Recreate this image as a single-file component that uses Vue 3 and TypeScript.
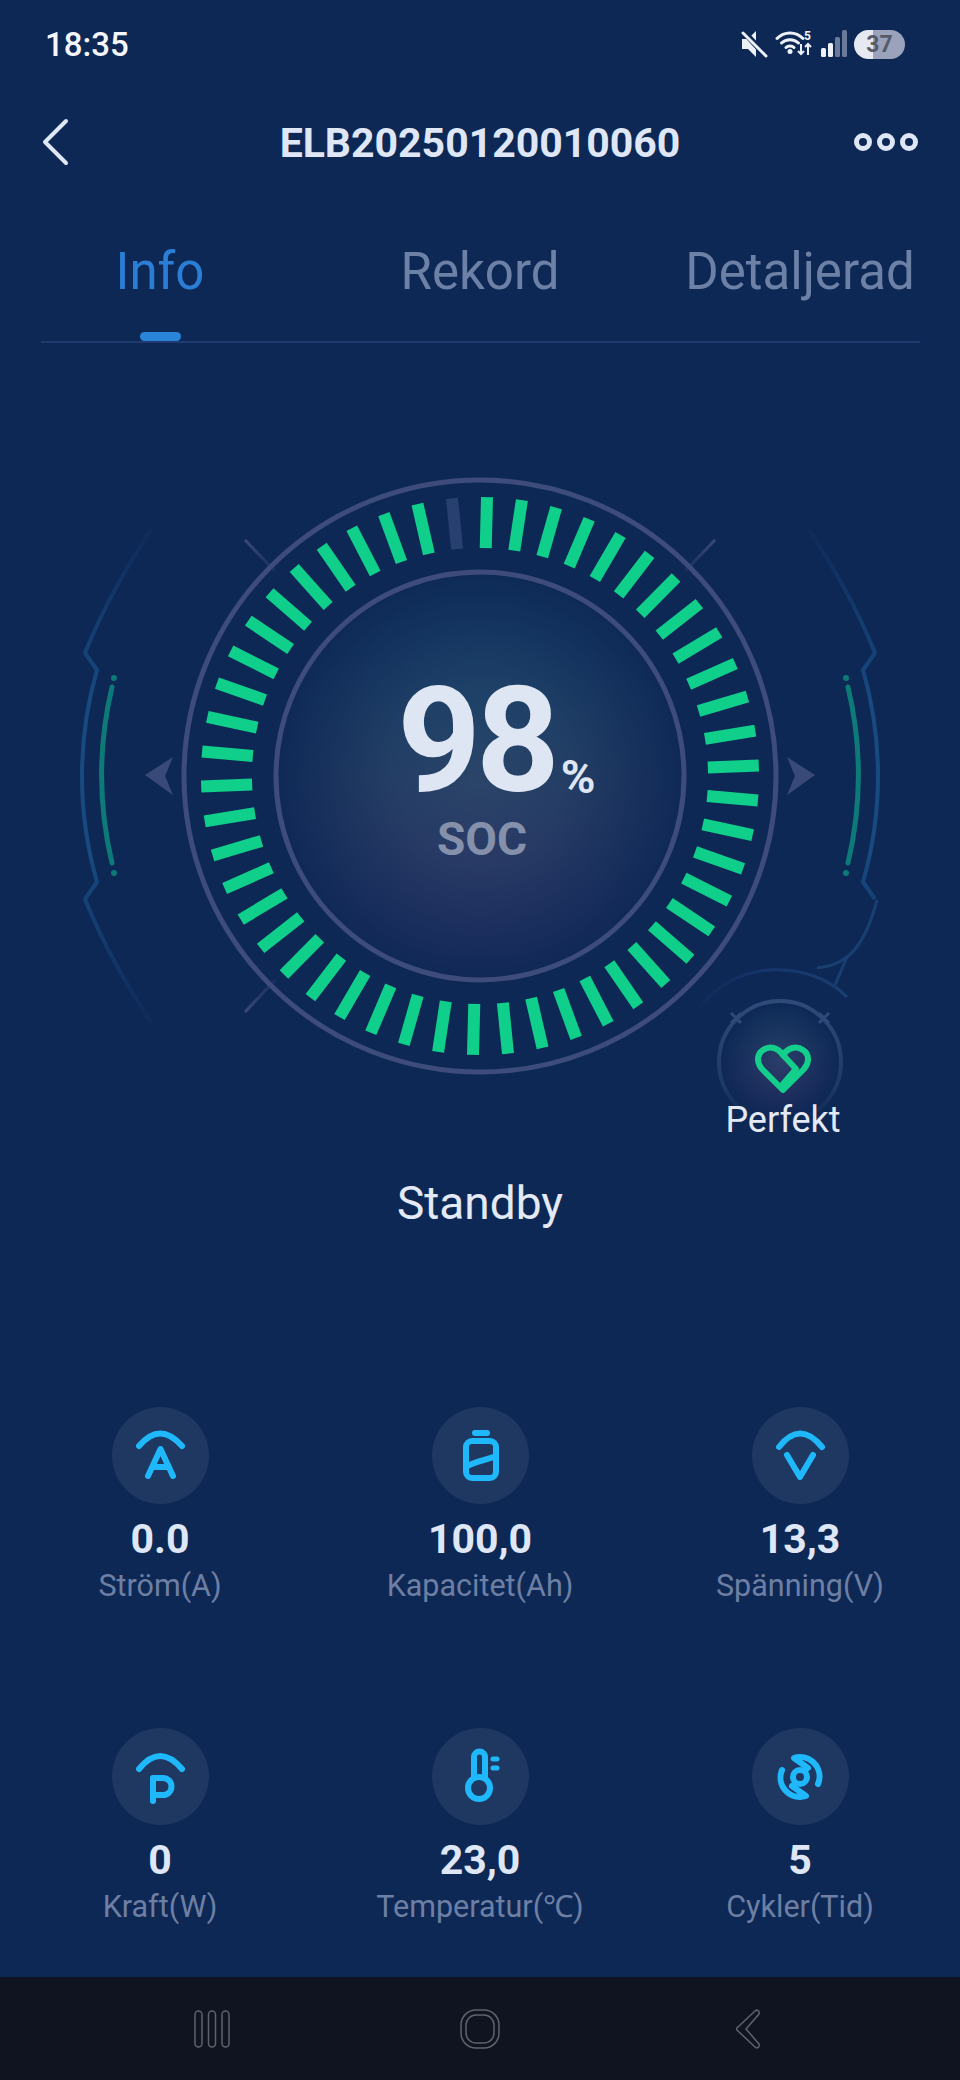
<script setup lang="ts">
interface Tick {
  angle: number;
  on: boolean;
}

interface Stat {
  value: string;
  label: string;
  icon: string;
}

const tabs = ["Info", "Rekord", "Detaljerad"];

// 50 segments, 98 % means one stays dark
const ticks: Tick[] = Array.from({ length: 50 }, (_, i) => ({
  angle: 1.44 + i * 7.2,
  on: i !== 49,
}));

const stats: Stat[] = [
  { value: "0.0", label: "Ström(A)", icon: "current" },
  { value: "100,0", label: "Kapacitet(Ah)", icon: "capacity" },
  { value: "13,3", label: "Spänning(V)", icon: "voltage" },
  { value: "0", label: "Kraft(W)", icon: "power" },
  { value: "23,0", label: "Temperatur(℃)", icon: "temp" },
  { value: "5", label: "Cykler(Tid)", icon: "cycles" },
];
</script>

<template>
  <div class="screen">
    <div class="status">
      <span class="status__time">18:35</span>
      <div class="status__icons">
        <svg width="28" height="28" viewBox="0 0 28 28">
          <path d="M2 9h6l8-8v26l-8-8H2z" fill="#eef1f7" />
          <path d="M3 1l24 26" stroke="#0e2856" stroke-width="6" />
          <path d="M3 3l23 23" stroke="#eef1f7" stroke-width="3" stroke-linecap="round" />
        </svg>
        <svg width="38" height="28" viewBox="0 0 38 28">
          <g fill="none" stroke="#eef1f7" stroke-width="3" stroke-linecap="round">
            <path d="M2 8.500C9 1 21 1 28 8.500" />
            <path d="M6.500 13C11 8.500 19 8.500 23.500 13" />
            <path d="M11 17.500C13 15.500 17 15.500 19 17.500" />
          </g>
          <circle cx="15" cy="21.500" r="2.500" fill="#eef1f7" />
          <text x="29" y="10" class="status__five">5</text>
          <path d="M26 14v10M23 21l3 3 3-3M33 25V14M30 17l3-3 3 3" fill="none" stroke="#eef1f7" stroke-width="2" />
        </svg>
        <svg width="28" height="28" viewBox="0 0 28 28">
          <rect x="1" y="18" width="5" height="9" rx="1.500" fill="#eef1f7" />
          <rect x="8" y="13" width="5" height="14" rx="1.500" fill="#eef1f7" />
          <rect x="15" y="7" width="5" height="20" rx="1.500" fill="#6b7a9b" />
          <rect x="22" y="0" width="5" height="27" rx="1.500" fill="#6b7a9b" />
        </svg>
        <div class="status__battery">37</div>
      </div>
    </div>

    <header class="header">
      <svg class="header__back" width="28" height="48" viewBox="0 0 28 48">
        <path d="M25 3L4 24l21 21" fill="none" stroke="#dfe7f7" stroke-width="4" stroke-linecap="round" stroke-linejoin="round" />
      </svg>
      <h1 class="header__title">ELB20250120010060</h1>
      <svg class="header__more" width="66" height="20" viewBox="0 0 66 20">
        <g fill="none" stroke="#dfe7f7" stroke-width="5">
          <circle cx="10" cy="10" r="6.500" />
          <circle cx="33" cy="10" r="6.500" />
          <circle cx="56" cy="10" r="6.500" />
        </g>
      </svg>
    </header>

    <nav class="tabs">
      <span
        v-for="(tab, i) in tabs"
        :key="tab"
        :class="['tabs__item', { 'tabs__item--active': i === 0 }]"
      >{{ tab }}</span>
    </nav>
    <div class="tabs__rule"></div>

    <section class="gauge">
      <svg class="gauge__art" width="960" height="800" viewBox="0 0 960 800">
        <defs>
          <radialGradient id="coreFade" cx="50%" cy="50%" r="50%">
            <stop offset="0" stop-color="#fff" />
            <stop offset="0.45" stop-color="#fff" stop-opacity="0.75" />
            <stop offset="1" stop-color="#fff" stop-opacity="0.05" />
          </radialGradient>
          <mask id="coreMask">
            <circle cx="480" cy="400" r="204" fill="url(#coreFade)" />
          </mask>
          <linearGradient id="coreTint" x1="0" y1="0" x2="0" y2="1">
            <stop offset="0" stop-color="#1a4c72" />
            <stop offset="0.5" stop-color="#2b4569" />
            <stop offset="1" stop-color="#37386b" />
          </linearGradient>
          <linearGradient id="frame" gradientUnits="userSpaceOnUse" x1="0" y1="140" x2="0" y2="660">
            <stop offset="0" stop-color="#174a80" stop-opacity="0" />
            <stop offset="0.25" stop-color="#174a80" stop-opacity="0.7" />
            <stop offset="0.35" stop-color="#174a80" />
            <stop offset="0.65" stop-color="#174a80" />
            <stop offset="0.75" stop-color="#174a80" stop-opacity="0.7" />
            <stop offset="1" stop-color="#174a80" stop-opacity="0" />
          </linearGradient>
          <linearGradient id="spoke" gradientUnits="userSpaceOnUse" x1="245" y1="164" x2="275" y2="195">
            <stop offset="0" stop-color="#3a4a78" />
            <stop offset="1" stop-color="#3a4a78" stop-opacity="0.2" />
          </linearGradient>
          <linearGradient id="spokeLow" gradientUnits="userSpaceOnUse" x1="245" y1="636" x2="275" y2="604">
            <stop offset="0" stop-color="#3a4a78" />
            <stop offset="1" stop-color="#3a4a78" stop-opacity="0.2" />
          </linearGradient>
        </defs>

        <circle cx="480" cy="400" r="204" fill="url(#coreTint)" mask="url(#coreMask)" />
        <circle cx="480" cy="400" r="296" fill="none" stroke="#3d4c7b" stroke-width="5" />
        <circle cx="480" cy="400" r="204" fill="none" stroke="#3d4c7b" stroke-width="5" />

        <!-- left side -->
        <path d="M153 151Q110 215 85 277L97 294A382 382 0 0 0 97 506L85 523Q110 585 153 649" fill="none" stroke="url(#frame)" stroke-width="4" stroke-linejoin="round" />
        <path d="M112 311A382 382 0 0 0 112 487" fill="none" stroke="#0d7a78" stroke-width="5" stroke-linecap="round" />
        <circle cx="114" cy="302" r="3" fill="#0d7a78" />
        <circle cx="114" cy="497" r="3" fill="#0d7a78" />
        <path d="M145 399L173 381L165 400L173 419Z" fill="#3a4a78" />
        <path d="M245 164L275 195" stroke="url(#spoke)" stroke-width="3" />
        <path d="M245 636L275 604" stroke="url(#spokeLow)" stroke-width="3" />

        <!-- right side, the low end of the frame runs on into the health badge -->
        <g transform="translate(960 0) scale(-1 1)">
          <path d="M153 151Q110 215 85 277L97 294A382 382 0 0 0 97 506L85 523" fill="none" stroke="url(#frame)" stroke-width="4" stroke-linejoin="round" />
          <path d="M112 311A382 382 0 0 0 112 487" fill="none" stroke="#0d7a78" stroke-width="5" stroke-linecap="round" />
          <circle cx="114" cy="302" r="3" fill="#0d7a78" />
          <circle cx="114" cy="497" r="3" fill="#0d7a78" />
          <path d="M145 399L173 381L165 400L173 419Z" fill="#3a4a78" />
          <path d="M245 164L275 195" stroke="url(#spoke)" stroke-width="3" />
        </g>

        <rect
          v-for="tick in ticks"
          :key="tick.angle"
          x="474"
          y="121"
          width="12"
          height="51"
          :fill="tick.on ? '#10cf8a' : '#27406f'"
          :transform="`rotate(${tick.angle} 480 400)`"
        />
      </svg>

      <div class="gauge__reading">
        <div class="gauge__value">98<span class="gauge__unit">%</span></div>
        <div class="gauge__label">SOC</div>
      </div>

      <div class="health">
        <svg class="health__art" width="240" height="220" viewBox="0 0 240 220">
          <defs>
            <radialGradient id="healthFade" cx="50%" cy="50%" r="50%">
              <stop offset="0" stop-color="#fff" stop-opacity="0.9" />
              <stop offset="1" stop-color="#fff" stop-opacity="0" />
            </radialGradient>
            <mask id="healthMask">
              <circle cx="100" cy="100" r="60" fill="url(#healthFade)" />
            </mask>
            <linearGradient id="healthTint" x1="0" y1="0" x2="0" y2="1">
              <stop offset="0" stop-color="#24506f" />
              <stop offset="1" stop-color="#3a3068" />
            </linearGradient>
            <linearGradient id="healthRing" x1="0" y1="0" x2="0" y2="1">
              <stop offset="0" stop-color="#2e4a78" />
              <stop offset="0.7" stop-color="#2e4a78" stop-opacity="0.5" />
              <stop offset="1" stop-color="#2e4a78" stop-opacity="0" />
            </linearGradient>
            <linearGradient id="healthArc" gradientUnits="userSpaceOnUse" x1="20" y1="0" x2="170" y2="0">
              <stop offset="0" stop-color="#16366c" stop-opacity="0.2" />
              <stop offset="0.5" stop-color="#16366c" />
              <stop offset="1" stop-color="#174070" />
            </linearGradient>
          </defs>
          <circle cx="100" cy="100" r="60" fill="url(#healthTint)" mask="url(#healthMask)" />
          <circle cx="100" cy="100" r="61" fill="none" stroke="url(#healthRing)" stroke-width="4" />
          <path d="M20 45C55 -3 130 -3 167 35" fill="none" stroke="url(#healthArc)" stroke-width="3" />
          <path d="M197 -62C190 -35 180 -15 167 -5C158 2 148 5 137 6M167 -5L155 23" fill="none" stroke="#174070" stroke-width="3" />
          <path d="M51 51l10 10M61 51l-10 10M139 51l10 10M149 51l-10 10" stroke="#2e4a78" stroke-width="3" />
          <path d="M103 128L82 107C76 100 77 92 83 88C90 83 98 86 103 93C108 86 116 83 123 88C129 92 130 100 124 107Z" fill="none" stroke="#14cf8c" stroke-width="6" stroke-linejoin="round" />
          <path d="M103 93L116 107L103 122" fill="none" stroke="#14cf8c" stroke-width="6" stroke-linecap="round" stroke-linejoin="round" />
        </svg>
        <span class="health__label">Perfekt</span>
      </div>
    </section>

    <p class="state">Standby</p>

    <div class="stats">
      <div v-for="stat in stats" :key="stat.label" class="stat">
        <div class="stat__icon">
          <svg width="97" height="97" viewBox="0 0 97 97" fill="none" stroke="#1fb8fb" stroke-width="6" stroke-linecap="round" stroke-linejoin="round">
            <template v-if="stat.icon === 'current'">
              <path d="M27 39Q48 14 70 39" />
              <path d="M36 69L48.500 42L61 69M41 60H56" />
            </template>
            <template v-else-if="stat.icon === 'capacity'">
              <path d="M43 26H55" />
              <rect x="34" y="34" width="30" height="37" rx="6" />
              <path d="M34 60C44 54 52 54 64 49" />
            </template>
            <template v-else-if="stat.icon === 'voltage'">
              <path d="M27 40Q48 13 70 40" />
              <path d="M35 48L48 70L61 48" />
            </template>
            <template v-else-if="stat.icon === 'power'">
              <path d="M27 41Q48 15 70 41" />
              <path d="M41 73V50H51A8.500 8.500 0 0 1 51 67H41" />
            </template>
            <template v-else-if="stat.icon === 'temp'">
              <path d="M42 50V29A5.500 5.500 0 0 1 53 29V50" />
              <circle cx="47" cy="60" r="11" />
              <path d="M61 31H65M61 40H65" stroke-width="5" />
            </template>
            <template v-else>
              <path d="M66 56A19.500 19.500 0 0 0 42 30L56 40" />
              <path d="M30 42A19.500 19.500 0 0 0 54 68L40 58" />
              <circle cx="48" cy="49" r="7" />
            </template>
          </svg>
        </div>
        <div class="stat__value">{{ stat.value }}</div>
        <div class="stat__label">{{ stat.label }}</div>
      </div>
    </div>

    <footer class="navbar">
      <svg width="36" height="38" viewBox="0 0 36 38" fill="none" stroke="#5e626b" stroke-width="1.500">
        <rect x="1" y="1" width="7" height="36" rx="3.500" />
        <rect x="14.500" y="1" width="7" height="36" rx="3.500" />
        <rect x="28" y="1" width="7" height="36" rx="3.500" />
      </svg>
      <svg width="40" height="40" viewBox="0 0 40 40" fill="none" stroke="#5e626b" stroke-width="1.500">
        <rect x="1" y="1" width="38" height="38" rx="15" />
        <rect x="6" y="6" width="28" height="28" rx="10" />
      </svg>
      <svg width="26" height="40" viewBox="0 0 26 40" fill="none" stroke="#5e626b" stroke-width="1.500">
        <path d="M20 2C22 0 25 2 24 5L11 20L24 35C25 38 22 40 20 38L3 22C1 21 1 19 3 18Z" />
      </svg>
    </footer>
  </div>
</template>

<style>
body {
  background: #0e2856;
}
</style>

<style scoped>
.screen {
  display: flex;
  flex-direction: column;
  width: 960px;
  height: 2080px;
  overflow: hidden;
  background: #0e2856;
  color: #dfe7f7;
  font-family: Roboto, "Liberation Sans", sans-serif;
}

.status {
  display: flex;
  align-items: center;
  justify-content: space-between;
  height: 58px;
  margin-top: 15px;
  padding: 0 55px 0 45px;
}

.status__time {
  font-size: 33px;
  font-weight: 500;
  color: #f4f6fb;
}

.status__icons {
  display: flex;
  align-items: center;
  gap: 7px;
}

.status__five {
  font-size: 12px;
  font-weight: 700;
  fill: #eef1f7;
}

.status__battery {
  width: 51px;
  height: 29px;
  margin-left: -1px;
  border-radius: 15px;
  background: linear-gradient(90deg, #e6e9f2 0 37%, #9aa3bb 37% 100%);
  color: #565b68;
  font-size: 23px;
  font-weight: 700;
  line-height: 29px;
  text-align: center;
}

.header {
  display: grid;
  grid-template-columns: 1fr auto 1fr;
  align-items: center;
  height: 60px;
  margin-top: 39px;
  padding: 0 41px;
}

.header__more {
  justify-self: end;
}

.header__title {
  margin: 0;
  padding-top: 2px;
  font-size: 41px;
  font-weight: 700;
  line-height: 58px;
}

.tabs {
  display: grid;
  grid-template-columns: repeat(3, 1fr);
  height: 99px;
  margin-top: 70px;
}

.tabs__item {
  position: relative;
  color: #6d80a6;
  font-size: 51px;
  line-height: 60px;
  text-align: center;
}

.tabs__item--active {
  color: #2a7fd4;
}

.tabs__item--active::after {
  content: "";
  position: absolute;
  left: 50%;
  bottom: 0;
  width: 41px;
  height: 9px;
  margin-left: -20px;
  border-radius: 5px;
  background: #2a84d8;
}

.tabs__rule {
  height: 2px;
  margin: 0 40px 0 41px;
  background: #1f3a6e;
}

.gauge {
  position: relative;
  height: 800px;
  margin-top: 33px;
}

.gauge__art {
  display: block;
}

.gauge__reading {
  position: absolute;
  top: 308px;
  left: 0;
  width: 100%;
  text-align: center;
}

.gauge__value {
  position: relative;
  width: max-content;
  margin: 0 auto;
  padding-right: 8px;
  color: #dfe6f3;
  font-size: 146px;
  font-weight: 700;
  letter-spacing: -5px;
  line-height: 116px;
}

.gauge__unit {
  position: absolute;
  left: 100%;
  bottom: 0;
  margin-left: -2px;
  font-size: 47px;
  letter-spacing: 0;
  line-height: 47px;
}

.gauge__label {
  margin-top: 14px;
  padding-left: 4px;
  color: #8590ab;
  font-size: 46px;
  font-weight: 700;
  line-height: 50px;
}

.health {
  position: absolute;
  top: 586px;
  left: 680px;
  width: 240px;
  height: 220px;
}

.health__art {
  display: block;
  overflow: visible;
}

.health__label {
  position: absolute;
  top: 138px;
  left: 103px;
  transform: translateX(-50%);
  color: #e3e9f5;
  font-size: 36px;
  line-height: 40px;
}

.state {
  margin: 0;
  color: #e3e9f5;
  font-size: 46px;
  line-height: 54px;
  text-align: center;
}

.stats {
  display: grid;
  grid-template-columns: repeat(3, 1fr);
  row-gap: 124px;
  margin-top: 177px;
}

.stat {
  display: flex;
  flex-direction: column;
  align-items: center;
}

.stat__icon {
  width: 97px;
  height: 97px;
  border-radius: 50%;
  background: #1f3861;
}

.stat__value {
  margin-top: 12px;
  font-size: 41px;
  font-weight: 700;
  line-height: 46px;
}

.stat__label {
  margin-top: 6px;
  color: #6d7fa3;
  font-size: 30.500px;
  line-height: 36px;
}

.navbar {
  display: grid;
  grid-template-columns: repeat(3, 268px);
  justify-content: center;
  justify-items: center;
  align-items: center;
  height: 103px;
  margin-top: auto;
  background: #0f1420;
}
</style>
